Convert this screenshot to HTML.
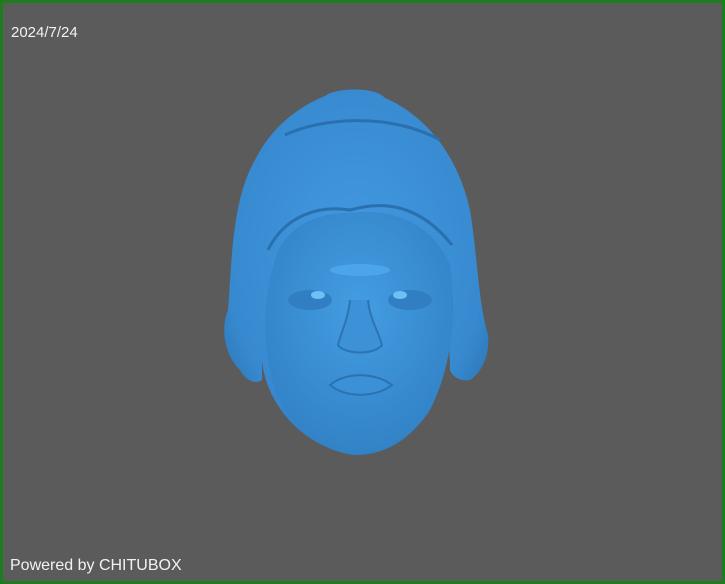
<!DOCTYPE html>
<html><head><style>
html,body{margin:0;padding:0}
body{width:725px;height:584px;overflow:hidden;background:#5b5b5b;position:relative;font-family:"Liberation Sans",sans-serif}
.frame{position:absolute;left:0;top:0;width:719px;height:578px;border:3px solid #1b7d1b}
.t{position:absolute;color:#f2f2f2;font-size:15px}
</style></head><body>
<div class="frame"></div>
<div class="t" style="left:11px;top:24px">2024/7/24</div>
<div class="t" style="left:10px;top:557px;font-size:16px">Powered by CHITUBOX</div>
<svg width="725" height="584" style="position:absolute;left:0;top:0">
<defs>
<radialGradient id="g" cx="0.5" cy="0.45" r="0.6">
<stop offset="0" stop-color="#4299e0"/><stop offset="0.8" stop-color="#388ad0"/><stop offset="1" stop-color="#2d78ba"/>
</radialGradient>
<radialGradient id="f" cx="0.5" cy="0.4" r="0.6">
<stop offset="0" stop-color="#449de2"/><stop offset="1" stop-color="#3282c6"/>
</radialGradient>
</defs>
<path d="M325 96 C335 88 375 86 385 98 C425 115 458 155 470 210 C478 260 478 300 488 335 C490 355 482 372 470 380 C460 382 452 376 450 370 L448 300 C448 370 420 440 360 455 C300 450 265 400 262 360 L262 380 C255 385 245 380 240 370 C225 355 220 330 228 310 C232 260 232 200 255 160 C270 130 295 108 325 96 Z" fill="url(#g)"/>
<path d="M285 135 C320 118 390 112 440 140" stroke="#2a6fae" stroke-width="3" fill="none"/>
<path d="M268 250 C285 215 320 205 350 210 C385 200 420 205 452 245" stroke="#2a6fae" stroke-width="3" fill="none"/>
<path d="M275 260 C285 225 320 212 350 213 C385 208 430 218 450 265 C458 320 450 370 430 410 C410 440 385 455 355 455 C320 452 290 425 275 390 C262 350 262 300 275 260 Z" fill="url(#f)"/>
<ellipse cx="310" cy="300" rx="22" ry="10" fill="#317ec2"/>
<ellipse cx="410" cy="300" rx="22" ry="10" fill="#317ec2"/>
<ellipse cx="318" cy="295" rx="7" ry="4" fill="#6cc0f5"/>
<ellipse cx="400" cy="295" rx="7" ry="4" fill="#6cc0f5"/>
<path d="M350 300 C348 320 340 335 338 345 C345 355 375 355 382 345 C378 330 370 320 368 300" fill="#3d91d6" stroke="#2c74b3" stroke-width="2"/>
<path d="M330 385 C345 372 375 372 392 385 C375 398 345 398 330 385 Z" fill="#3c90d5" stroke="#2b72b0" stroke-width="2"/>
<ellipse cx="360" cy="270" rx="30" ry="6" fill="#4ca5e8"/>
</svg>
</body></html>
